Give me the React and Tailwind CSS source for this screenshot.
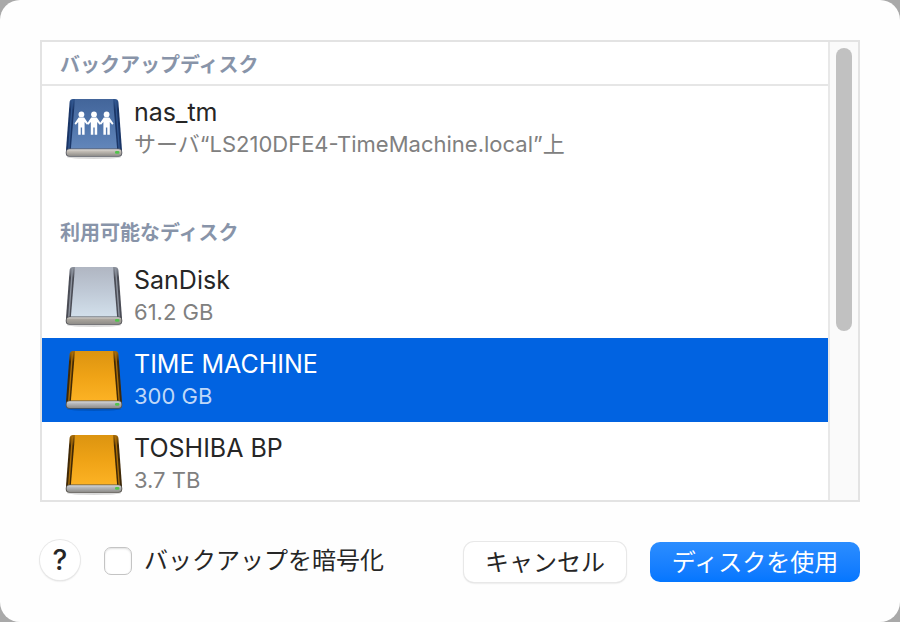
import { useState } from "react";

const palettes = {
  network: { top: "#43659a", mid: "#5075ab", bottom: "#6387bb", edge: "#1a3566", edgeSoft: "#31568f", base: "#c4beb6", rim: "#5b5d66" },
  silver: { top: "#b0b6c2", mid: "#c0cad7", bottom: "#d3e1ec", edge: "#4a4c55", edgeSoft: "#8d939e", base: "#aaa59d", rim: "#55565a" },
  orange: { top: "#dc9410", mid: "#efa316", bottom: "#fdb325", edge: "#3f2806", edgeSoft: "#a96d08", base: "#b9bcc0", rim: "#55524c" },
};

function Person({ x }) {
  return (
    <g transform={`translate(${x} 1.4)`}>
      <circle cx="0" cy="17" r="2.9" />
      <path d="M-2.8 20.2H2.8L6.9 26L5.6 27.4L3.2 24.6V37.4H0.7V30H-0.7V37.4H-3.2V24.6L-5.6 27.4L-6.9 26Z" />
    </g>
  );
}

function DiskIcon({ kind }) {
  const c = palettes[kind];
  const face = `face-${kind}`;
  const side = `side-${kind}`;
  const base = `base-${kind}`;
  return (
    <svg className="h-16 w-15 shrink-0" viewBox="0 0 60 64" aria-hidden="true">
      <defs>
        <linearGradient id={face} x1="0" y1="0" x2="0" y2="1">
          <stop offset="0" stopColor={c.top} />
          <stop offset="0.5" stopColor={c.mid} />
          <stop offset="1" stopColor={c.bottom} />
        </linearGradient>
        <linearGradient id={side} x1="0" y1="0" x2="0" y2="1">
          <stop offset="0" stopColor={c.edgeSoft} />
          <stop offset="0.2" stopColor={c.edge} />
          <stop offset="1" stopColor={c.edge} />
        </linearGradient>
        <linearGradient id={base} x1="0" y1="0" x2="0" y2="1">
          <stop offset="0" stopColor="#dedddb" />
          <stop offset="0.3" stopColor={c.base} />
          <stop offset="1" stopColor="#8f8d89" />
        </linearGradient>
      </defs>
      <ellipse cx="30" cy="61" rx="27" ry="2" fill="#000" opacity="0.15" />
      <path d="M9 3H51Q54 3 54.4 6L58 54Q58 56 56 56H4Q2 56 2 54L5.6 6Q6 3 9 3Z" fill={`url(#${side})`} />
      <path d="M8.4 4.5L4.8 53M51.6 4.5L55.2 53" stroke={c.edgeSoft} strokeWidth="1.4" />
      <path d="M11 3H49L53.2 54H6.8Z" fill={`url(#${face})`} />
      <rect x="1.8" y="52.6" width="56.4" height="8.2" rx="3.6" fill={c.rim} />
      <rect x="2.6" y="53.2" width="54.8" height="6.8" rx="3.2" fill={`url(#${base})`} />
      <rect x="51" y="55" width="4.4" height="2.8" rx="1.3" fill="#52c44c" />
      {kind === "network" && (
        <g fill="#fff">
          <Person x={17.4} />
          <Person x={30} />
          <Person x={42.6} />
        </g>
      )}
    </svg>
  );
}

function DiskRow({ name, detail, kind, selected, onSelect }) {
  return (
    <button
      type="button"
      aria-pressed={selected}
      onClick={onSelect}
      className={`flex h-21 w-full shrink-0 items-center gap-2.5 px-[22px] text-left ${
        selected ? "bg-[#0163e1] text-white" : "text-[#262626]"
      }`}
    >
      <DiskIcon kind={kind} />
      <span className="flex min-w-0 flex-col">
        <span className="text-[25px] leading-8">{name}</span>
        <span className={`truncate text-[22px] leading-8 ${selected ? "text-[#bfd8f8]" : "text-[#808080]"}`}>
          {detail}
        </span>
      </span>
    </button>
  );
}

export default function App() {
  const [selected, setSelected] = useState("TIME MACHINE");
  const row = (name, detail, kind) => (
    <DiskRow name={name} detail={detail} kind={kind} selected={selected === name} onSelect={() => setSelected(name)} />
  );

  return (
    <div className="min-h-screen bg-[#a9a9a9] font-[Inter,'Noto_Sans_CJK_JP',sans-serif]">
      <main className="flex min-h-screen flex-col rounded-[20px] bg-[#fefefe] p-10">
        <section className="flex h-[462px] border-2 border-[#e3e3e3] bg-white">
          <div className="flex min-w-0 flex-1 flex-col overflow-hidden">
            <h2 className="h-11 shrink-0 border-b-2 border-[#e6e6e6] px-[18px] text-[20px] leading-[46px] font-bold text-[#8894a9]">
              バックアップディスク
            </h2>
            {row("nas_tm", "サーバ“LS210DFE4-TimeMachine.local”上", "network")}
            <h2 className="mt-10 h-11 shrink-0 px-[18px] text-[20px] leading-[46px] font-bold text-[#8894a9]">
              利用可能なディスク
            </h2>
            {row("SanDisk", "61.2 GB", "silver")}
            {row("TIME MACHINE", "300 GB", "orange")}
            {row("TOSHIBA BP", "3.7 TB", "orange")}
          </div>
          <div className="w-[30px] shrink-0 border-l-2 border-[#e8e8e8] bg-[#fafafa] px-1.5 pt-1.5">
            <div className="h-[283px] w-4 rounded-full bg-[#c1c1c1]" />
          </div>
        </section>

        <footer className="mt-[38px] flex items-start text-[24px] leading-[42px] text-[#262626]">
          <button
            type="button"
            aria-label="ヘルプ"
            className="flex size-10 items-center justify-center rounded-full bg-white text-[28px] font-medium shadow-[0_0_0_1px_#e8e8e8,0_1px_2px_#00000030]"
          >
            ?
          </button>
          <label className="ml-6 flex items-center gap-3">
            <input
              type="checkbox"
              className="size-7 appearance-none rounded-[7px] border border-[#c4c4c4] bg-white shadow-[inset_0_1px_2px_#00000020] checked:bg-[#0a7aff]"
            />
            バックアップを暗号化
          </label>
          <div className="mt-0.5 ml-auto flex gap-6">
            <button
              type="button"
              className="h-10 w-[162px] rounded-[10px] bg-white shadow-[0_0_0_1px_#e8e8e8,0_1px_2px_#00000038]"
            >
              キャンセル
            </button>
            <button
              type="button"
              className="h-10 w-[210px] rounded-[10px] bg-linear-to-b from-[#2b8dff] to-[#0476ff] text-white"
            >
              ディスクを使用
            </button>
          </div>
        </footer>
      </main>
    </div>
  );
}
